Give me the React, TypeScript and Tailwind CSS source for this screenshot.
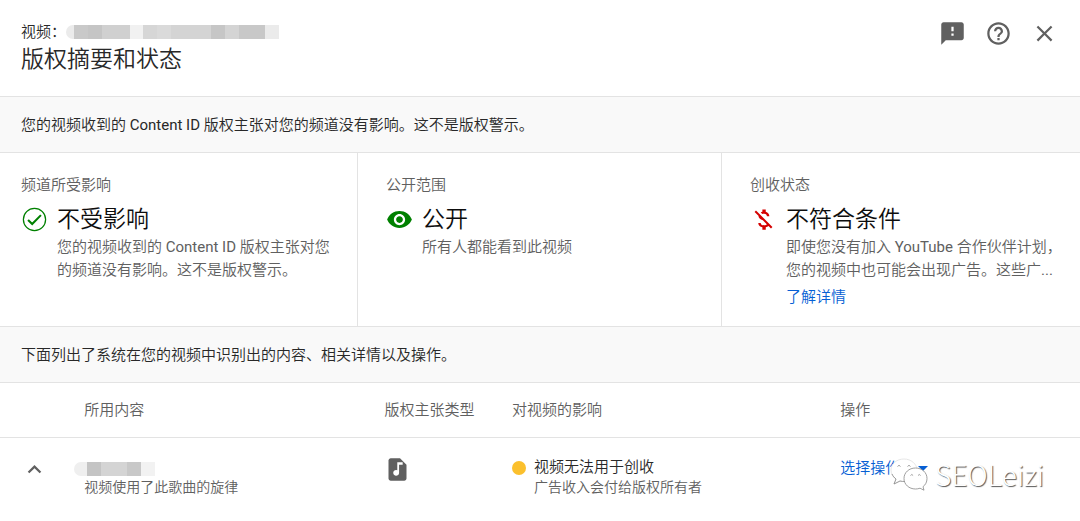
import type { ReactNode } from "react";
import { MdClose, MdExpandLess, MdFeedback, MdHelpOutline, MdMoneyOff, MdVisibility } from "react-icons/md";

const TITLE_BLOCKS = [
  "w-2 rounded-l-full bg-[#ebebeb]",
  "w-[14px] bg-[#c9c9c9]",
  "w-[14px] bg-[#c5c5c5]",
  "w-7 bg-[#d0d0d0]",
  "w-[13px] bg-[#f1f1f1]",
  "w-[14px] bg-[#d6d6d6]",
  "w-[14px] bg-[#dadada]",
  "w-10 bg-[#d4d4d4]",
  "w-[14px] bg-[#c6c6c6]",
  "w-[14px] bg-[#d4d4d4]",
  "w-[26px] bg-[#c8c8c8]",
  "w-[14px] bg-[#ebebeb]",
];

const SONG_BLOCKS = [
  "w-[13px] rounded-l-full bg-[#efefef]",
  "w-[14px] bg-[#c4c4c4]",
  "w-[26px] bg-[#d4d4d4]",
  "w-[14px] bg-[#c8c8c8]",
  "w-[14px] bg-[#f2f2f2]",
];

function Redacted({ blocks, label }: { blocks: string[]; label: string }) {
  return (
    <span role="img" aria-label={label} className="flex h-[14px]">
      {blocks.map((block, index) => (
        <span key={index} className={block} />
      ))}
    </span>
  );
}

function Banner({ children }: { children: ReactNode }) {
  return (
    <p className="border-y border-[#e3e3e3] bg-[#f9f9f9] px-[21px] pt-[17px] pb-[15px] text-[15px] leading-[23px] text-[#282828]">
      {children}
    </p>
  );
}

function StatusCard({
  label,
  title,
  icon,
  children,
  className,
}: {
  label: string;
  title: string;
  icon: ReactNode;
  children: ReactNode;
  className: string;
}) {
  return (
    <section className={`pt-5 pr-4 pb-[17px] ${className}`}>
      <p className="text-[15px] leading-6 text-[#606060]">{label}</p>
      <div className="mt-[7px] flex">
        <span className="mt-[2px] flex w-9 shrink-0">{icon}</span>
        <div className="min-w-0 text-[15px] leading-[23px] text-[#606060]">
          <h2 className="text-[23px] leading-8 text-[#0d0d0d]">{title}</h2>
          {children}
        </div>
      </div>
    </section>
  );
}

function CheckIcon() {
  return (
    <svg viewBox="0 0 26 26" className="size-[27px]" fill="none" stroke="#008000" aria-hidden="true">
      <circle cx="13" cy="13" r="10.700" strokeWidth="1.2" />
      <path d="M6.800 13.400l4 4 8.400-8.600" strokeWidth="2" />
    </svg>
  );
}

function SongIcon() {
  return (
    <svg viewBox="0 0 24 24" className="size-[27px]" role="img" aria-label="音频">
      <path d="M6 2h8.200L20 7.700V20c0 1.100-.9 2-2 2H6c-1.100 0-2-.9-2-2V4c0-1.100.9-2 2-2z" fill="#606060" />
      <path d="M11.800 5.500h4.800v2.200h-3.200V15a2.600 2.600 0 1 1-1.600-2.400z" fill="#fff" />
    </svg>
  );
}

function Watermark() {
  return (
    <div className="pointer-events-none absolute top-[455px] right-9 flex items-center gap-[6px]">
      <svg viewBox="0 0 40 36" className="h-9 w-10" fill="#fff" stroke="#888" strokeWidth="0.8" aria-hidden="true">
        <path d="M15 3C7.500 3 2 8 2 14c0 4 2 7 5 9l-2 5 6-3c2 .6 3 .6 5 .5C28 25 28 19 28 14 28 8 22 3 15 3z" stroke="#e0e0e0" />
        <path d="M3 18c1 2.200 2.300 3.800 4 5l-2 5 6-3c2 .5 3 .5 5 .4" fill="none" />
        <path d="M26.500 12C20 12 15 16.500 15 22.500S20 33 26.500 33c1.500 0 3-.2 4.500-.8l4 2-1-3.500c2.500-1.800 4-4.700 4-8.200C38 16.500 33 12 26.500 12z" />
        <path d="M8.500 10.500q1.500-2.500 3 0M18.500 10.500q1.500-2.500 3 0M21.500 19.500q1.300-2 2.600 0M29 19.500q1.300-2 2.600 0" fill="none" />
      </svg>
      <span className="font-['Noto_Sans_CJK_SC',sans-serif] text-[28px] leading-[38px] font-light text-white [text-shadow:1px_1px_1px_#555]">
        SEOLeizi
      </span>
    </div>
  );
}

export default function App() {
  return (
    <main
      className="relative bg-white font-[Roboto,'Noto_Sans_CJK_SC_DemiLight','Noto_Sans_CJK_SC',sans-serif] text-[#282828]"
      lang="zh-CN"
    >
      <header className="flex justify-between pt-5 pr-[22px] pb-5 pl-[21px]">
        <div>
          <div className="flex items-center text-[15px] leading-6">
            <span>视频：</span>
            <Redacted blocks={TITLE_BLOCKS} label="视频标题" />
          </div>
          <h1 className="text-[23px] leading-8">版权摘要和状态</h1>
        </div>
        <div className="flex items-start gap-[19px] text-[#606060]">
          <button type="button" aria-label="发送反馈">
            <MdFeedback size={27} />
          </button>
          <button type="button" aria-label="帮助">
            <MdHelpOutline size={27} />
          </button>
          <button type="button" aria-label="关闭">
            <MdClose size={27} />
          </button>
        </div>
      </header>

      <Banner>您的视频收到的 Content ID 版权主张对您的频道没有影响。这不是版权警示。</Banner>

      <div className="grid grid-cols-[358fr_364fr_358fr] divide-x divide-[#e3e3e3]">
        <StatusCard label="频道所受影响" title="不受影响" icon={<CheckIcon />} className="pl-[21px]">
          <p>您的视频收到的 Content ID 版权主张对您的频道没有影响。这不是版权警示。</p>
        </StatusCard>
        <StatusCard label="公开范围" title="公开" icon={<MdVisibility size={27} color="#008000" />} className="pl-7">
          <p>所有人都能看到此视频</p>
        </StatusCard>
        <StatusCard label="创收状态" title="不符合条件" icon={<MdMoneyOff size={27} color="#d40000" />} className="pl-7">
          <p>即使您没有加入 YouTube 合作伙伴计划，您的视频中也可能会出现广告。这些广...</p>
          <a href="#details" className="mt-1 block text-[#065fd4]">
            了解详情
          </a>
        </StatusCard>
      </div>

      <Banner>下面列出了系统在您的视频中识别出的内容、相关详情以及操作。</Banner>

      <table className="w-full table-fixed text-left text-[15px] leading-[22px]">
        <colgroup>
          <col className="w-[7.8%]" />
          <col className="w-[27.8%]" />
          <col className="w-[11.8%]" />
          <col className="w-[30.4%]" />
          <col />
        </colgroup>
        <thead>
          <tr className="border-b border-[#e3e3e3] text-[#606060]">
            <th aria-label="展开" />
            <th className="py-4 font-normal">所用内容</th>
            <th className="font-normal">版权主张类型</th>
            <th className="font-normal">对视频的影响</th>
            <th className="font-normal">操作</th>
          </tr>
        </thead>
        <tbody>
          <tr className="align-top">
            <td className="pt-[18px] pl-[21px] text-[#606060]">
              <button type="button" aria-label="收起" className="block">
                <MdExpandLess size={27} />
              </button>
            </td>
            <td className="pt-6">
              <div className="-ml-[10px]">
                <Redacted blocks={SONG_BLOCKS} label="歌曲名称" />
              </div>
              <p className="text-[14px] text-[#606060]">视频使用了此歌曲的旋律</p>
            </td>
            <td className="pt-[18px]">
              <SongIcon />
            </td>
            <td className="pt-[19px]">
              <div className="flex gap-2">
                <span className="mt-1 size-[14px] shrink-0 rounded-full bg-[#fbc02d]" />
                <div className="leading-5">
                  <p>视频无法用于创收</p>
                  <p className="text-[14px] text-[#606060]">广告收入会付给版权所有者</p>
                </div>
              </div>
            </td>
            <td className="pt-[19px]">
              <button type="button" className="flex items-center gap-[18px] text-[#065fd4]">
                选择操作
                <svg viewBox="0 0 10 5" className="h-[5px] w-[10px]" fill="#065fd4" aria-hidden="true">
                  <path d="M0 0h10L5 5z" />
                </svg>
              </button>
            </td>
          </tr>
        </tbody>
      </table>
      <Watermark />
    </main>
  );
}
